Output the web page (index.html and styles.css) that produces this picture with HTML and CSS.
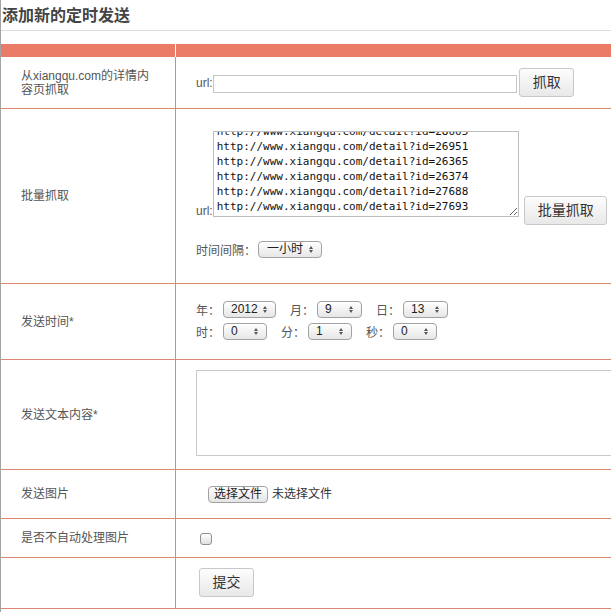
FILE: index.html
```html
<!DOCTYPE html>
<html lang="zh-CN">
<head>
<meta charset="utf-8">
<title>添加新的定时发送</title>
<link rel="stylesheet" href="styles.css">
</head>
<body>
<div class="page">
  <h2 class="title">添加新的定时发送</h2>
  <div class="form">
    <div class="row head"><div class="cl"></div><div class="cr"></div></div>

    <div class="row r1">
      <div class="cl">从xiangqu.com的详情内容页抓取</div>
      <div class="cr">
        <span class="lbl">url:</span><input class="url" type="text"><button class="btn">抓取</button>
      </div>
    </div>

    <div class="row r2">
      <div class="cl">批量抓取</div>
      <div class="cr">
        <div class="line1">
          <span class="lbl lbl-url">url:</span><textarea class="batch">http://www.xiangqu.com/detail?id=25873
http://www.xiangqu.com/detail?id=26120
http://www.xiangqu.com/detail?id=28005
http://www.xiangqu.com/detail?id=26951
http://www.xiangqu.com/detail?id=26365
http://www.xiangqu.com/detail?id=26374
http://www.xiangqu.com/detail?id=27688
http://www.xiangqu.com/detail?id=27693</textarea><button class="btn btn-batch">批量抓取</button>
        </div>
        <div class="line2">
          <span class="lbl">时间间隔：</span><span class="sel sel-int"><select><option>一小时</option></select></span>
        </div>
      </div>
    </div>

    <div class="row r3">
      <div class="cl">发送时间*</div>
      <div class="cr">
        <div class="sel-line">
          <span class="grp"><span class="lbl">年：</span><span class="sel sel-year"><select><option>2012</option></select></span></span>
          <span class="grp"><span class="lbl">月：</span><span class="sel sel-m"><select><option>9</option></select></span></span>
          <span class="grp"><span class="lbl">日：</span><span class="sel sel-m"><select><option>13</option></select></span></span>
        </div>
        <div class="sel-line second">
          <span class="grp"><span class="lbl">时：</span><span class="sel sel-t"><select><option>0</option></select></span></span>
          <span class="grp"><span class="lbl">分：</span><span class="sel sel-t"><select><option>1</option></select></span></span>
          <span class="grp"><span class="lbl">秒：</span><span class="sel sel-t"><select><option>0</option></select></span></span>
        </div>
      </div>
    </div>

    <div class="row r4">
      <div class="cl">发送文本内容*</div>
      <div class="cr"><textarea class="content"></textarea></div>
    </div>

    <div class="row r5">
      <div class="cl">发送图片</div>
      <div class="cr">
        <label class="filebtn"><input type="file" class="hidden-file">选择文件</label><span class="nofile">未选择文件</span>
      </div>
    </div>

    <div class="row r6">
      <div class="cl">是否不自动处理图片</div>
      <div class="cr"><input type="checkbox" class="chk"></div>
    </div>

    <div class="row r7">
      <div class="cl"></div>
      <div class="cr"><button class="btn btn-submit">提交</button></div>
    </div>
  </div>
</div>
<script src="script.js"></script>
</body>
</html>
```

FILE: styles.css
```css
html, body {
  margin: 0;
  padding: 0;
  background: #fff;
}
body {
  font-family: "Liberation Sans", "Noto Sans CJK SC", sans-serif;
  font-size: 12px;
  color: #555;
}
.page {
  border-left: 1px solid #a3a3a3;
  min-height: 612px;
  box-sizing: border-box;
  overflow: hidden;
}
.title {
  margin: 0 0 13px 0;
  height: 31px;
  box-sizing: border-box;
  padding: 1px 0 0 1px;
  line-height: 29px;
  border-bottom: 1px solid #dcdcdc;
  font-size: 16px;
  font-weight: bold;
  color: #444;
}
.row {
  display: grid;
  grid-template-columns: 175px 1fr;
  border-bottom: 1px solid #dc8873;
  box-sizing: border-box;
}
.cl {
  border-right: 1px solid #dc8873;
  box-sizing: border-box;
  padding: 0 20px;
  display: flex;
  align-items: center;
  line-height: 14px;
}
.cr {
  padding-left: 20px;
  box-sizing: border-box;
  min-width: 0;
}
.head {
  height: 13px;
  background: #ea7b67;
  border-bottom: none;
}
.head .cl { border-right-color: #fff; }

.r1 { height: 52px; }
.r2 { height: 175px; }
.r3 { height: 76px; }
.r4 { height: 110px; }
.r5 { height: 49px; }
.r6 { height: 39px; }
.r7 { height: 51px; }

.lbl { white-space: nowrap; }

/* buttons */
.btn {
  font-family: "Liberation Sans", "Noto Sans CJK SC", sans-serif;
  font-size: 14px;
  color: #333;
  height: 29px;
  padding: 0 12px 0 13px;
  border: 1px solid #c8c8c8;
  border-radius: 3px;
  background: linear-gradient(#fdfdfd, #e8e8e8);
  box-sizing: border-box;
  margin: 0;
  line-height: 27px;
}

/* row 1 */
.r1 .cr {
  display: flex;
  align-items: center;
  padding-top: 11px;
  align-self: start;
}
.url {
  width: 304px;
  height: 18px;
  box-sizing: border-box;
  border: 1px solid #c6c6c6;
  margin: 3px 0 0 0;
  padding: 0 2px;
}
.r1 .btn { margin-left: 2px; }

/* row 2 */
.r2 .cr { padding-top: 22px; }
.line1 {
  display: flex;
  align-items: flex-end;
}
.lbl-url { margin-bottom: -1px; }
.batch {
  width: 306px;
  height: 86px;
  box-sizing: border-box;
  margin: 0;
  padding: 2px 3px;
  border: 1px solid #bdbdbd;
  font-family: "DejaVu Sans Mono", monospace;
  font-size: 11px;
  line-height: 15px;
  color: #111;
  overflow: hidden;
  white-space: pre;
  resize: both;
}
.btn-batch {
  margin-left: 5px;
  margin-bottom: -8px;
}
.line2 {
  margin-top: 24px;
  display: flex;
  align-items: center;
}
.line2 .sel { margin-left: 2px; }

/* selects */
.sel {
  position: relative;
  display: inline-block;
  height: 17px;
}
.sel select {
  -webkit-appearance: none;
  appearance: none;
  height: 17px;
  box-sizing: border-box;
  border: 1px solid #a2a2a2;
  border-radius: 4px;
  background: linear-gradient(#ffffff, #e6e6e6);
  font-family: "Liberation Sans", "Noto Sans CJK SC", sans-serif;
  font-size: 12px;
  color: #222;
  padding: 0 0 0 7px;
  margin: 0;
  line-height: 15px;
  display: block;
}
.sel::before,
.sel::after {
  content: "";
  position: absolute;
  right: 9px;
  width: 0;
  height: 0;
  border-left: 2px solid transparent;
  border-right: 2px solid transparent;
  pointer-events: none;
}
.sel::before {
  top: 5px;
  border-bottom: 3px solid #555;
}
.sel::after {
  top: 9px;
  border-top: 3px solid #555;
}
.sel-int select { width: 64px; padding-left: 8px; }
.sel-year select { width: 53px; }
.sel-m select { width: 45px; }
.sel-t select { width: 44px; }

/* row 3 */
.r3 .cr { padding-top: 17px; }
.sel-line {
  display: flex;
  align-items: center;
  gap: 14px;
  height: 17px;
}
.sel-line.second { margin-top: 5px; }
.grp {
  display: flex;
  align-items: center;
}
.grp .sel { margin-left: 3px; }

/* row 4 */
.r4 .cr { padding-top: 10px; }
.content {
  display: block;
  width: 460px;
  height: 86px;
  box-sizing: border-box;
  margin: 0;
  border: 1px solid #c9c9c9;
  resize: none;
}

/* row 5 */
.r5 .cr {
  padding-top: 16px;
  display: flex;
  align-items: center;
  align-self: start;
  box-sizing: border-box;
}
.filebtn {
  margin-left: 12px;
  height: 17px;
  width: 60px;
  box-sizing: border-box;
  border: 1px solid #a2a2a2;
  border-radius: 4px;
  background: linear-gradient(#ffffff, #e4e4e4);
  color: #222;
  font-size: 12px;
  line-height: 15px;
  text-align: center;
  display: inline-block;
}
.hidden-file { display: none; }
.nofile {
  margin-left: 4px;
  color: #333;
  line-height: 17px;
}

/* row 6 */
.r6 .cr { padding-top: 14px; }
.chk {
  -webkit-appearance: none;
  appearance: none;
  display: block;
  width: 12px;
  height: 12px;
  margin: 0 0 0 4px;
  border: 1px solid #8f8f8f;
  border-radius: 3px;
  background: linear-gradient(#ffffff, #e0e0e0);
  box-sizing: border-box;
}

/* row 7 */
.r7 .cr { padding-top: 10px; }
.btn-submit {
  margin-left: 3px;
  width: 55px;
  padding: 0;
}
```

FILE: script.js
```js
var ta = document.querySelector('.batch');
if (ta) { ta.scrollTop = ta.scrollHeight; }
```
